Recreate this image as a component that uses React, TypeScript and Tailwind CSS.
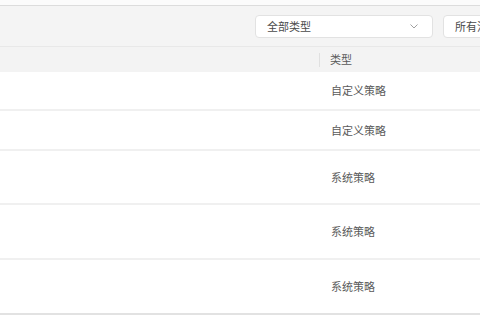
import React from "react";

const font = { fontFamily: '"Noto Sans CJK SC", "Noto Sans", sans-serif' };

function Chevron() {
  return (
    <svg width="10" height="10" viewBox="0 0 10 10" fill="none">
      <path d="M1.5 3.5 L5 7 L8.5 3.5" stroke="#a0a0a0" strokeWidth="1" />
    </svg>
  );
}

const rows = [
  { t: "自定义策略", h: "h-[39px]" },
  { t: "自定义策略", h: "h-[40px]" },
  { t: "系统策略", h: "h-[54px]" },
  { t: "系统策略", h: "h-[55px]" },
  { t: "系统策略", h: "h-[55px]" },
];

export default function App() {
  return (
    <div className="w-[480px] h-[320px] bg-white overflow-hidden" style={font}>
      <div className="h-[5px] bg-[#fbfbfb]" />
      <div className="border-t border-[#dcdcdc] bg-[#f4f4f4] h-[41px] flex items-center pl-[255px] gap-[10px]">
        <div className="w-[178px] h-[23px] bg-white border border-[#e2e2e2] rounded-[4px] flex items-center justify-between pl-[11px] pr-[13px] shrink-0">
          <span className="text-[11px] text-[#4a4a4a]">全部类型</span>
          <Chevron />
        </div>
        <div className="w-[100px] h-[23px] bg-white border border-[#e2e2e2] rounded-[4px] flex items-center pl-[11px] shrink-0">
          <span className="text-[11px] text-[#4a4a4a] whitespace-nowrap">所有活动</span>
        </div>
      </div>
      <div className="border-t border-[#e8e8e8] bg-[#f3f3f3] h-[26px] flex items-center">
        <div className="w-[319px] shrink-0" />
        <div className="w-px h-[14px] bg-[#e0e0e0]" />
        <span className="ml-[10px] text-[11px] text-[#5a5a5a]">类型</span>
      </div>
      {rows.map((r, i) => (
        <div
          key={i}
          className={`${r.h} border-b-2 ${i === rows.length - 1 ? "border-[#e2e2e2]" : "border-[#f0f0f0]"} flex items-center`}
        >
          <span className="ml-[331px] text-[11px] text-[#5a5a5a]">{r.t}</span>
        </div>
      ))}
    </div>
  );
}
